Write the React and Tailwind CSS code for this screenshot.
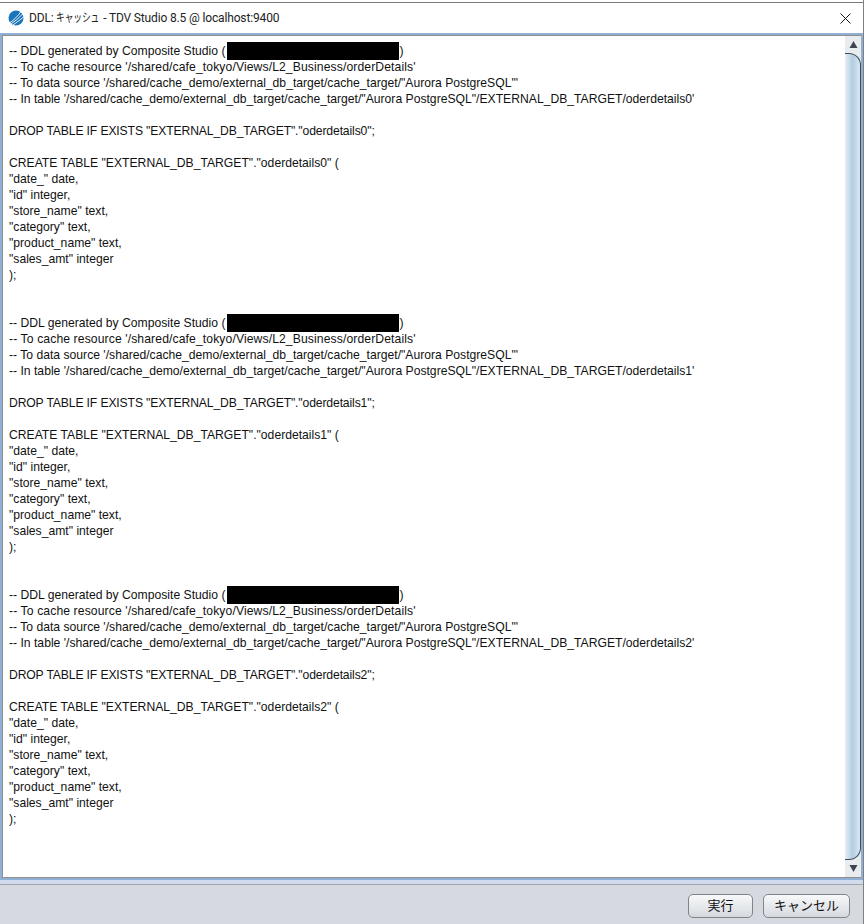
import React from 'react';

const ddlBlock = (n) => [
  { redacted: true },
  "-- To cache resource '/shared/cafe_tokyo/Views/L2_Business/orderDetails'",
  `-- To data source '/shared/cache_demo/external_db_target/cache_target/"Aurora PostgreSQL"'`,
  `-- In table '/shared/cache_demo/external_db_target/cache_target/"Aurora PostgreSQL"/EXTERNAL_DB_TARGET/oderdetails${n}'`,
  '',
  `DROP TABLE IF EXISTS "EXTERNAL_DB_TARGET"."oderdetails${n}";`,
  '',
  `CREATE TABLE "EXTERNAL_DB_TARGET"."oderdetails${n}" (`,
  '"date_" date,',
  '"id" integer,',
  '"store_name" text,',
  '"category" text,',
  '"product_name" text,',
  '"sales_amt" integer',
  ');',
  '',
  '',
];

const lines = [...ddlBlock(0), ...ddlBlock(1), ...ddlBlock(2)];

// the reference font is hinted, a couple of lines run wider or narrower than Arial metrics
const trackingFor = (line) => {
  if (line.redacted) return '';
  if (line.startsWith('DROP')) return 'tracking-[-0.13px]';
  if (line.startsWith('-- To cache')) return 'tracking-[0.11px]';
  return '';
};

const Logo = () => (
  <svg width="16" height="16" viewBox="0 0 16 16">
    <circle cx="8" cy="8" r="7.5" fill="#1b75bb" />
    <path d="M1.5 13 C6 10 10 6 13 1.5 M3 14 C7 11 11 8 14.5 4 M5 15 C9 12 12 10 15.5 7" stroke="#ffffff" strokeWidth="0.9" fill="none" />
  </svg>
);

const Arrow = ({ up }) => (
  <svg width="9" height="9" viewBox="0 0 9 9">
    <path d={up ? 'M4.5 1 L8.5 8 L0.5 8 Z' : 'M4.5 8 L8.5 1 L0.5 1 Z'} fill="#3c4650" />
  </svg>
);

const DialogButton = ({ label, width }) => (
  <button className={`h-6 ${width} rounded-[5px] border border-[#7f858c] bg-gradient-to-b from-[#f8f9fa] to-[#d5d9df] text-[13px] leading-none text-[#111]`}>
    {label}
  </button>
);

export default function App() {
  return (
    <div className="flex h-[924px] w-[865px] overflow-hidden bg-white font-['Liberation_Sans','Noto_Sans_CJK_JP',sans-serif]">
      <div className="flex w-[863px] shrink-0 flex-col">
        <div className="h-[2px] shrink-0 bg-white" />
        <div className="h-px shrink-0 bg-[#7a7a7a]" />
        <div className="flex h-[30px] shrink-0 items-center justify-between pl-2 pr-[12px]">
          <div className="flex items-center gap-[5px] font-['Roboto','Noto_Sans_CJK_JP',sans-serif] text-[12px] tracking-[-0.15px] text-[#222]">
            <Logo />
            <span className="flex items-center">
              DDL:&nbsp;
              <span className="inline-block w-[44px] origin-left scale-x-[0.73] whitespace-nowrap">キャッシュ</span>
              &nbsp;- TDV Studio 8.5 @ localhost:9400
            </span>
          </div>
          <svg width="11" height="11" viewBox="0 0 11 11">
            <path d="M0.5 0.5 L10.5 10.5 M10.5 0.5 L0.5 10.5" stroke="#111" strokeWidth="1" />
          </svg>
        </div>
        <div className="flex h-[847px] shrink-0 border-[2px] border-[#8fb0d4] bg-white">
          <div className="flex min-w-0 flex-1 border-y border-l border-[#8f8f8f]">
            <div className="flex-1 overflow-hidden pl-[6px] pt-[7px] text-[12.16px] leading-[16px] text-[#111]">
              {lines.map((line, i) => (
                <div key={i} className={`h-4 whitespace-pre ${trackingFor(line)}`}>
                  {line.redacted ? (
                    <span className="flex items-center">
                      -- DDL generated by Composite Studio (
                      <span className="-my-px ml-[2px] h-[18px] w-[172px] shrink-0 bg-black" />)
                    </span>
                  ) : (
                    line
                  )}
                </div>
              ))}
            </div>
          </div>
          <div className="flex w-[16px] shrink-0 flex-col border-y border-[#8f8f8f] bg-[#e9ecef]">
            <div className="flex h-[17px] shrink-0 items-center justify-center"><Arrow up /></div>
            <div className="flex-1 rounded-r-[12px] border-y-[1.5px] border-r-[1.5px] border-[#3f4a57] bg-gradient-to-r from-[#e4edf4] via-[#b3cde2] to-[#d9e9f5]" />
            <div className="flex h-[17px] shrink-0 items-center justify-center"><Arrow /></div>
          </div>
        </div>
        <div className="flex flex-1 flex-col bg-[#d6d9e0]">
          <div className="h-1 shrink-0 bg-[#cfdced]" />
          <div className="h-px shrink-0 bg-[#a3a6ad]" />
          <div className="flex flex-1 items-center justify-end gap-[10px] pr-[13px] pt-[2px]">
            <DialogButton label="実行" width="w-[65px]" />
            <DialogButton label="キャンセル" width="w-[87px]" />
          </div>
        </div>
      </div>
      <div className="w-px shrink-0 bg-[#808080]" />
    </div>
  );
}
